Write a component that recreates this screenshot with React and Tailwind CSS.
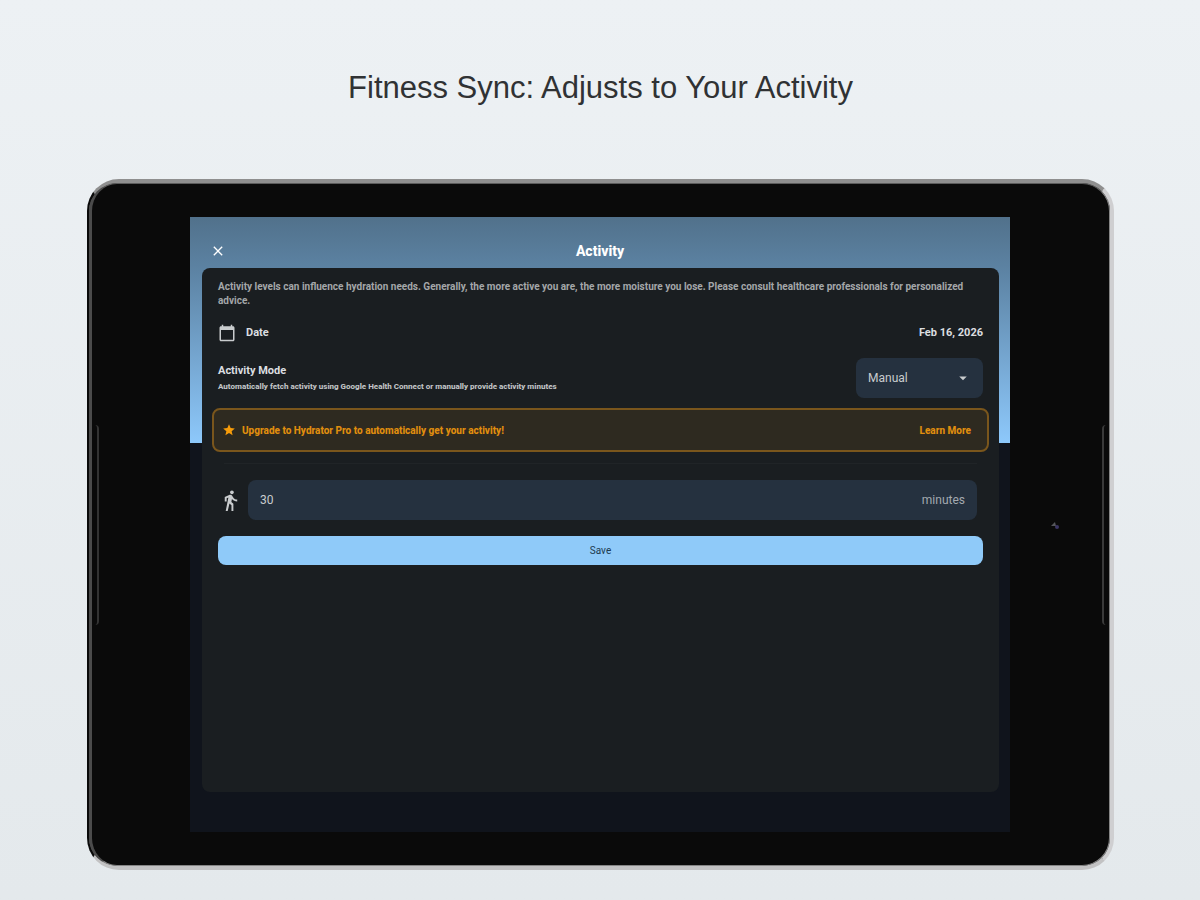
import React, { useState } from 'react';
import {
  MdArrowDropDown,
  MdCalendarToday,
  MdClose,
  MdDirectionsWalk,
  MdStar
} from 'react-icons/md';

const ScreenHeader = ({ title }) => (
  <header className="grid grid-cols-[1fr_auto_1fr] items-center px-5 pt-5 pb-[3px] text-white">
    <button type="button" aria-label="Close" className="justify-self-start">
      <MdClose size={16} />
    </button>
    <h2 className="text-[14px] leading-7 font-extrabold">{title}</h2>
  </header>
);

const DateRow = () => (
  <div className="mt-4 flex items-center justify-between text-[11px] leading-[18px] font-bold text-[#dcdee0]">
    <span className="flex items-center gap-2.5">
      <MdCalendarToday size={18} className="text-[#c9ccce]" />
      Date
    </span>
    <time dateTime="2026-02-16">Feb 16, 2026</time>
  </div>
);

const ModeRow = () => {
  const [mode, setMode] = useState('manual');

  return (
    <div className="mt-4 flex items-center justify-between">
      <label htmlFor="mode" className="flex flex-col pt-0.5 text-[#dcdee0]">
        <span className="text-[11px] leading-4 font-bold">Activity Mode</span>
        <span className="text-[8px] leading-4 font-extrabold text-[#c0c3c5]">
          Automatically fetch activity using Google Health Connect or manually provide activity minutes
        </span>
      </label>
      <div className="relative w-[127px]">
        <select
          id="mode"
          value={mode}
          onChange={(e) => setMode(e.target.value)}
          className="h-10 w-full appearance-none rounded-lg bg-[#25313f] px-3 text-[12px] text-[#c9ccce]"
        >
          <option value="manual">Manual</option>
          <option value="auto">Automatic</option>
        </select>
        <MdArrowDropDown
          size={18}
          className="pointer-events-none absolute top-[11px] right-[11px] text-[#c9ccce]"
        />
      </div>
    </div>
  );
};

const UpgradeBanner = () => (
  <div className="-mx-1.5 mt-2.5 flex h-11 items-center justify-between rounded-lg border-2 border-[#7a561c] bg-[#2e2a20] pr-4 pl-2 text-[10px] font-extrabold text-[#e08e0e]">
    <span className="flex items-center gap-1.5">
      <MdStar size={14} className="text-[#f79c0a]" />
      Upgrade to Hydrator Pro to automatically get your activity!
    </span>
    <a href="#pro">Learn More</a>
  </div>
);

const MinutesField = () => {
  const [minutes, setMinutes] = useState('30');

  return (
    <div className="mr-1.5 flex items-center gap-1.5 text-[#c9ccce]">
      <div className="flex w-6 justify-center">
        <MdDirectionsWalk size={23} />
      </div>
      <div className="flex h-10 flex-1 items-center rounded-lg bg-[#25313f] px-3 text-[12px]">
        <input
          id="minutes"
          type="text"
          inputMode="numeric"
          value={minutes}
          onChange={(e) => setMinutes(e.target.value)}
          className="min-w-0 flex-1 bg-transparent outline-none"
        />
        <label htmlFor="minutes" className="text-[#a3a9b0]">minutes</label>
      </div>
    </div>
  );
};

const ActivityScreen = () => (
  <div className="flex aspect-[4/3] min-w-0 flex-1 flex-col bg-[#10141c] bg-[linear-gradient(#51718b,#5d84a5_25%,#8dc8fb)] bg-[length:100%_226px] bg-no-repeat font-['Roboto',sans-serif]">
    <ScreenHeader title="Activity" />
    <main className="mr-[11px] mb-10 ml-3 flex-1 rounded-lg bg-[#1a1e21] px-4 pt-3">
      <p className="text-[10px] leading-[14px] font-bold text-[#a4a7a9]">
        Activity levels can influence hydration needs. Generally, the more active you are, the more moisture you lose. Please consult healthcare professionals for personalized advice.
      </p>
      <DateRow />
      <ModeRow />
      <UpgradeBanner />
      <hr className="mx-1.5 mt-[11px] mb-4 border-[#202427]" />
      <MinutesField />
      <button
        type="button"
        className="mt-4 h-[29px] w-full rounded-lg bg-[#8fcaf9] text-[10px] text-[#1d3a50]"
      >
        Save
      </button>
    </main>
  </div>
);

const Tablet = ({ children }) => (
  <div className="rounded-[32px] border-y-4 border-r-4 border-l-2 border-t-[#8f8f8f] border-r-[#cfcfd1] border-b-[#c2c2c3] border-l-[#0a0a0a] bg-[#5c5c5c]">
    <div className="flex items-center rounded-[28px] border-y border-r border-l-[3px] border-t-[#5c5c5c] border-r-[#858585] border-b-[#858585] border-l-[#4b4b4b] bg-[#0a0a0a] py-[33px]">
      <div className="w-[98px] shrink-0 pl-[3px]">
        <div className="h-[200px] w-1 rounded-r-sm border-r-2 border-[#333333]" />
      </div>
      {children}
      <div className="flex w-[99px] shrink-0 items-center justify-between pr-[3px] pl-10">
        <svg width="10" height="10" viewBox="0 0 10 10" aria-hidden="true">
          <path d="M1 6 L5 2 L6 6 Z" fill="#55565a" />
          <circle cx="7" cy="7" r="2" fill="#3b3663" />
        </svg>
        <div className="h-[200px] w-1 rounded-l-sm border-l-2 border-[#3a3a3a]" />
      </div>
    </div>
  </div>
);

const App = () => (
  <div className="min-h-screen bg-linear-to-b from-[#edf1f4] to-[#e4e9ec] pt-[70px] pr-[86px] pb-7 pl-[87px]">
    <h1 className="mb-[73px] text-center font-['Liberation_Sans',sans-serif] text-[31px] leading-9 text-[#303234]">
      Fitness Sync: Adjusts to Your Activity
    </h1>
    <Tablet>
      <ActivityScreen />
    </Tablet>
  </div>
);

export default App;
